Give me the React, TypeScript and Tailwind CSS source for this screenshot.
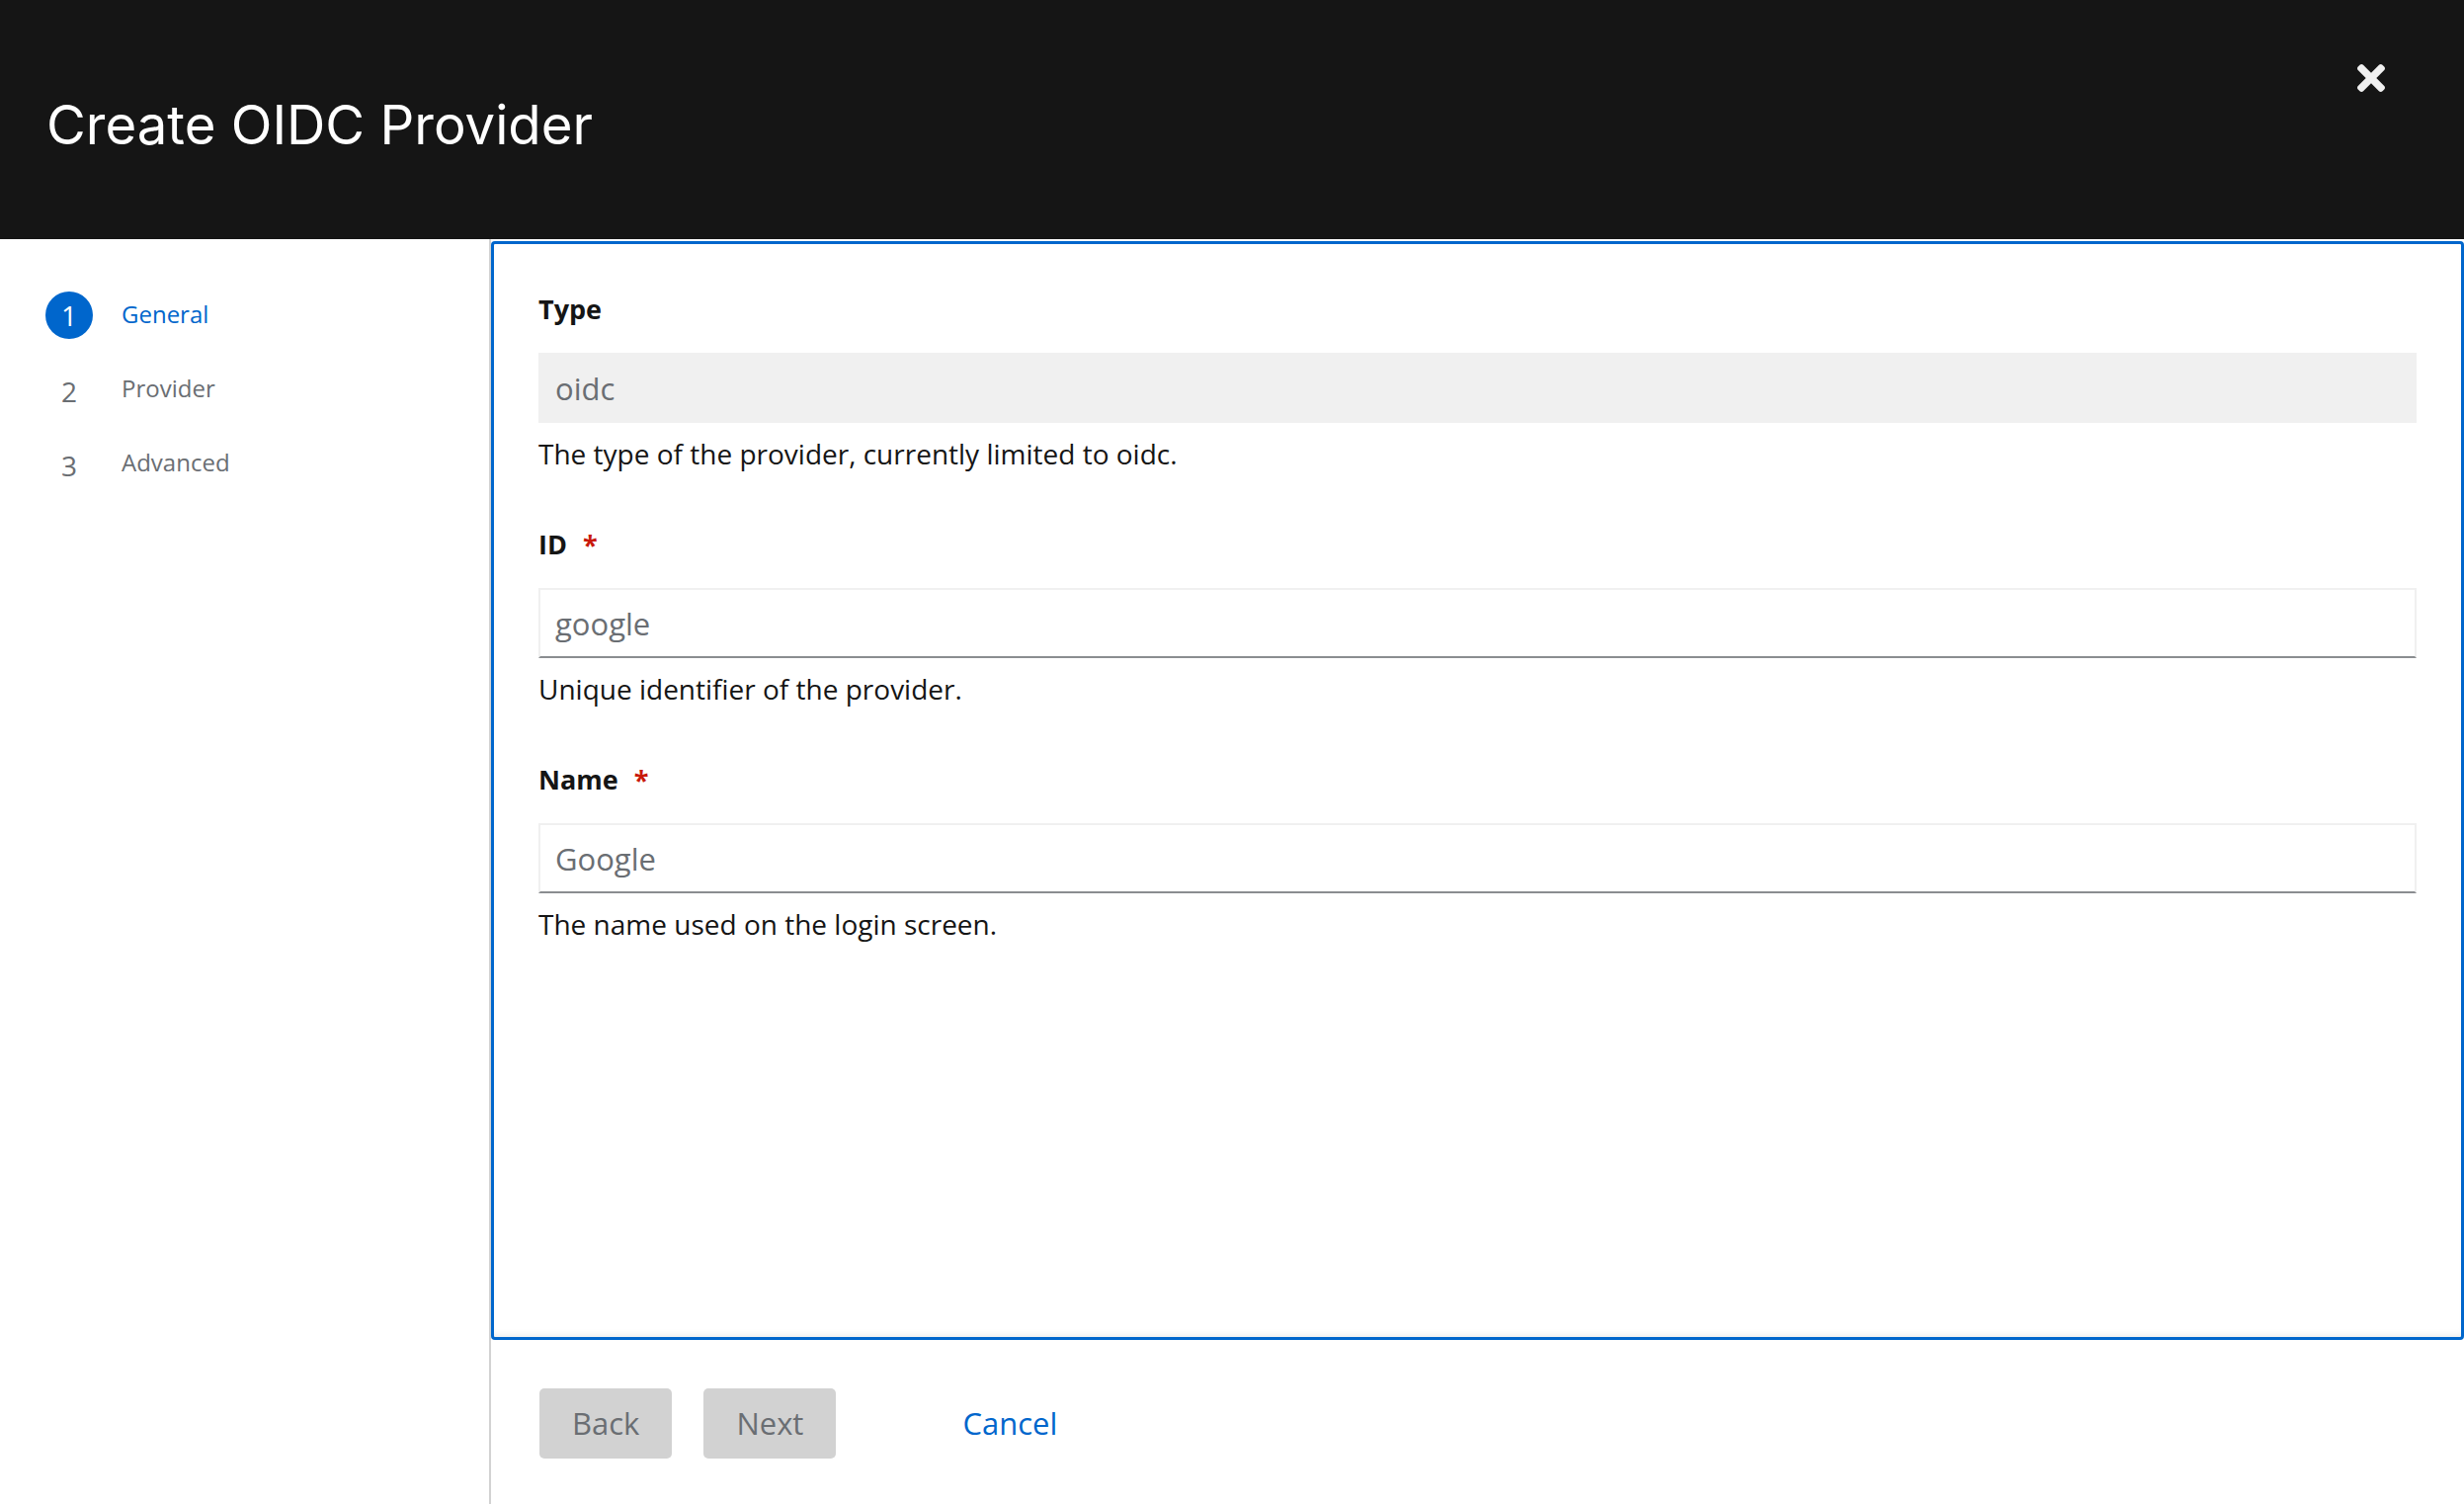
const steps = [
  { n: 1, label: "General", active: true },
  { n: 2, label: "Provider", active: false },
  { n: 3, label: "Advanced", active: false },
];

function CloseIcon() {
  return (
    <svg viewBox="0 80 352 352" className="w-[28px] h-[28px]" fill="#f0f0f0">
      <path d="M242.72 256l100.07-100.07c12.28-12.28 12.28-32.19 0-44.48l-22.24-22.24c-12.28-12.28-32.19-12.28-44.48 0L176 189.28 75.93 89.21c-12.28-12.28-32.19-12.28-44.48 0L9.21 111.45c-12.28 12.28-12.28 32.19 0 44.48L109.28 256 9.21 356.07c-12.28 12.28-12.28 32.19 0 44.48l22.24 22.240c12.28 12.28 32.2 12.28 44.48 0L176 322.72l100.07 100.07c12.28 12.28 32.2 12.28 44.48 0l22.24-22.24c12.28-12.28 12.28-32.19 0-44.48L242.72 256z" />
    </svg>
  );
}

interface FieldProps {
  label: string;
  required?: boolean;
  placeholder: string;
  readOnly?: boolean;
  helper: string;
}

function Field({ label, required, placeholder, readOnly, helper }: FieldProps) {
  return (
    <div className="flex flex-col">
      <label className="h-[36px] text-[27px] leading-[36px] font-bold text-[#151515]">
        {label}
        {required && <span className="ml-[16px] text-[#c9190b]">*</span>}
      </label>
      <input
        readOnly={readOnly}
        placeholder={placeholder}
        className={
          readOnly
            ? "mt-[26px] h-[71px] w-full bg-[#f0f0f0] px-[17px] text-[31px] text-[#6a6e73] placeholder:text-[#6a6e73] outline-none"
            : "mt-[26px] h-[71px] w-full bg-white border-2 border-[#f0f0f0] border-b-[#8a8d90] px-[15px] text-[31px] text-[#151515] placeholder:text-[#6a6e73] outline-none"
        }
      />
      <p className="mt-[12px] text-[28px] leading-[38px] text-[#151515]">{helper}</p>
    </div>
  );
}

export default function App() {
  return (
    <div
      className="h-screen w-full flex flex-col bg-white overflow-hidden"
      style={{ fontFamily: '"Open Sans", "Noto Sans", sans-serif' }}
    >
      <header className="h-[242px] shrink-0 bg-[#151515] flex justify-between items-start pl-[47px] pr-[80px]">
        <h1
          className="pt-[99px] text-[54.5px] leading-[54px] font-normal text-white"
          style={{ fontFamily: 'Inter, "Noto Sans", sans-serif' }}
        >
          Create OIDC Provider
        </h1>
        <button className="mt-[65px]" aria-label="Close">
          <CloseIcon />
        </button>
      </header>

      <div className="flex-1 flex min-h-0">
        <nav className="w-[497px] shrink-0 border-r-2 border-[#d2d2d2] pt-[53px] pl-[46px]">
          <ol className="flex flex-col gap-[27px]">
            {steps.map((s) => (
              <li key={s.n} className="flex items-center h-[48px]">
                <span
                  className={
                    s.active
                      ? "w-[48px] h-[48px] rounded-full bg-[#0066cc] text-white flex items-center justify-center text-[28px]"
                      : "w-[48px] h-[48px] flex items-center justify-center text-[28px] text-[#6a6e73] pt-[4px]"
                  }
                >
                  {s.n}
                </span>
                <span
                  className={
                    s.active
                      ? "ml-[29px] text-[24px] text-[#0066cc] -mt-[3px]"
                      : "ml-[29px] text-[24px] text-[#6a6e73] -mt-[3px]"
                  }
                >
                  {s.label}
                </span>
              </li>
            ))}
          </ol>
        </nav>

        <main className="flex-1 flex flex-col min-w-0">
          <section className="flex-1 mt-[2px] border-[3px] border-[#0066cc] rounded-[4px] pt-[48px] px-[45px] flex flex-col gap-[55px] shadow-[inset_0_-6px_8px_-6px_rgba(0,0,0,0.12)]">
            <Field
              label="Type"
              placeholder="oidc"
              readOnly
              helper="The type of the provider, currently limited to oidc."
            />
            <Field
              label="ID"
              required
              placeholder="google"
              helper="Unique identifier of the provider."
            />
            <Field
              label="Name"
              required
              placeholder="Google"
              helper="The name used on the login screen."
            />
          </section>

          <footer className="h-[166px] shrink-0 pt-[49px] pl-[49px] flex items-start">
            <button className="h-[71px] px-[33px] rounded-[5px] bg-[#d2d2d2] text-[31px] text-[#6a6e73]">
              Back
            </button>
            <button className="ml-[32px] h-[71px] px-[33px] rounded-[5px] bg-[#d2d2d2] text-[31px] text-[#6a6e73]">
              Next
            </button>
            <button className="ml-[128px] h-[71px] text-[31px] text-[#0066cc]">Cancel</button>
          </footer>
        </main>
      </div>
    </div>
  );
}
